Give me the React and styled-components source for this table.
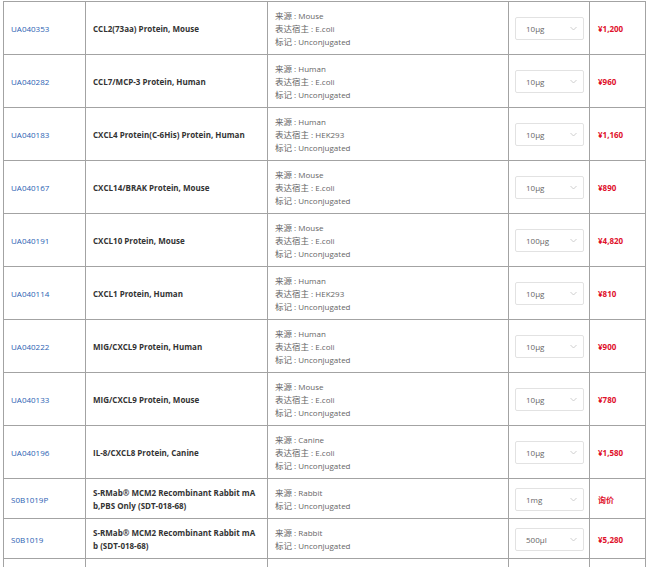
import styled, { createGlobalStyle } from 'styled-components'

const GlobalStyle = createGlobalStyle`
    body {
        margin: 0;
        background: #fff;
        font-family: "Open Sans", "Noto Sans CJK SC", sans-serif;
    }
`

const Page = styled.div`
    padding: 1px 0 0 3px;
    width: 650px;
    height: 567px;
    overflow: hidden;
    box-sizing: border-box;
`

const Table = styled.table`
    width: 642px;
    border-collapse: collapse;
    table-layout: fixed;
    font-size: 8px;
    color: #666;
`

const Row = styled.tr`
    height: ${p => p.$h}px;
`

const Cell = styled.td`
    border: 1px solid #a3a3a3;
    padding: 7px 6px 6px 7px;
    line-height: 13px;
    vertical-align: middle;
`

const CodeLink = styled.a`
    color: #2b62b3;
    text-decoration: none;
`

const Name = styled.div`
    font-weight: 700;
    color: #333;
    word-break: break-all;
    padding-right: 2px;
`

const Detail = styled.div`
    color: #666;
    white-space: nowrap;
`

const Label = styled.span`
    font-family: "Noto Sans CJK SC", sans-serif;
    font-size: 8.5px;
`

const Select = styled.div`
    display: flex;
    align-items: center;
    justify-content: space-between;
    height: 23px;
    box-sizing: border-box;
    margin-left: -1px;
    width: 69px;
    padding: 0 6px 0 10px;
    border: 1px solid #e2e2e2;
    border-radius: 2px;
    color: #666;
    background: #fff;
`

const Price = styled.span`
    color: #e0112b;
    font-weight: 700;
    padding-left: 1px;
`

const rows = [
    { code: 'UA040353', name: 'CCL2(73aa) Protein, Mouse', src: 'Mouse', host: 'E.coli', size: '10μg', price: '¥1,200' },
    { code: 'UA040282', name: 'CCL7/MCP-3 Protein, Human', src: 'Human', host: 'E.coli', size: '10μg', price: '¥960' },
    { code: 'UA040183', name: 'CXCL4 Protein(C-6His) Protein, Human', src: 'Human', host: 'HEK293', size: '10μg', price: '¥1,160' },
    { code: 'UA040167', name: 'CXCL14/BRAK Protein, Mouse', src: 'Mouse', host: 'E.coli', size: '10μg', price: '¥890' },
    { code: 'UA040191', name: 'CXCL10 Protein, Mouse', src: 'Mouse', host: 'E.coli', size: '100μg', price: '¥4,820' },
    { code: 'UA040114', name: 'CXCL1 Protein, Human', src: 'Human', host: 'HEK293', size: '10μg', price: '¥810' },
    { code: 'UA040222', name: 'MIG/CXCL9 Protein, Human', src: 'Human', host: 'E.coli', size: '10μg', price: '¥900' },
    { code: 'UA040133', name: 'MIG/CXCL9 Protein, Mouse', src: 'Mouse', host: 'E.coli', size: '10μg', price: '¥780' },
    { code: 'UA040196', name: 'IL-8/CXCL8 Protein, Canine', src: 'Canine', host: 'E.coli', size: '10μg', price: '¥1,580' },
    { code: 'S0B1019P', name: 'S-RMab® MCM2 Recombinant Rabbit mAb,PBS Only (SDT-018-68)', src: 'Rabbit', size: '1mg', price: '询价' },
    { code: 'S0B1019', name: 'S-RMab® MCM2 Recombinant Rabbit mAb (SDT-018-68)', src: 'Rabbit', size: '500μl', price: '¥5,280' },
]

const Chevron = () => (
    <svg width="7" height="5" viewBox="0 0 7 5">
        <path d="M0.5 1 L3.5 4 L6.5 1" fill="none" stroke="#c8c8c8" strokeWidth="0.9" />
    </svg>
)

const App = () => {
    return (
        <Page>
            <GlobalStyle />
            <Table>
                <colgroup>
                    <col style={{ width: 82 }} />
                    <col style={{ width: 182 }} />
                    <col style={{ width: 241 }} />
                    <col style={{ width: 81 }} />
                    <col style={{ width: 56 }} />
                </colgroup>
                <tbody>
                    {rows.map(r => (
                        <Row key={r.code} $h={r.host ? 53 : 40}>
                            <Cell><CodeLink href="#">{r.code}</CodeLink></Cell>
                            <Cell><Name>{r.name}</Name></Cell>
                            <Cell>
                                <Detail><Label>来源</Label> : {r.src}</Detail>
                                {r.host && <Detail><Label>表达宿主</Label> : {r.host}</Detail>}
                                <Detail><Label>标记</Label> : Unconjugated</Detail>
                            </Cell>
                            <Cell>
                                <Select>
                                    <span>{r.size}</span>
                                    <Chevron />
                                </Select>
                            </Cell>
                            <Cell><Price>{r.price}</Price></Cell>
                        </Row>
                    ))}
                    <Row $h={53}>
                        <Cell />
                        <Cell />
                        <Cell />
                        <Cell />
                        <Cell />
                    </Row>
                </tbody>
            </Table>
        </Page>
    )
}

export default App
